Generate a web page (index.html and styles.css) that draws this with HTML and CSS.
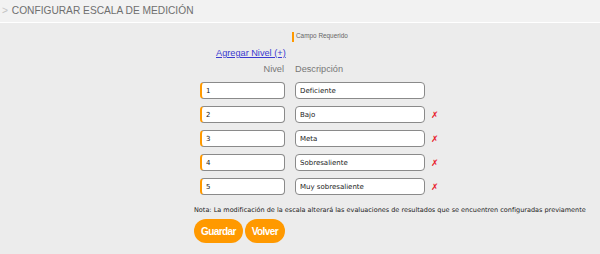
FILE: index.html
```html
<!DOCTYPE html>
<html lang="es">
<head>
    <meta charset="UTF-8">
    <title>Configurar Escala de Medición</title>
    <link rel="stylesheet" href="styles.css">
</head>
<body>
    <div class="page-title"><span class="crumb">&gt;</span> CONFIGURAR ESCALA DE MEDICIÓN</div>

    <div class="content">
        <div class="required-note"><span class="req-mark"></span>Campo Requerido</div>

        <div class="add-row"><a href="#" class="add-link">Agregar Nivel (+)</a></div>

        <div class="scale">
            <div class="col-head level-head">Nivel</div>
            <div class="col-head">Descripción</div>
            <div></div>

            <input type="text" class="field field-level" value="1">
            <input type="text" class="field field-desc" value="Deficiente">
            <div></div>

            <input type="text" class="field field-level" value="2">
            <input type="text" class="field field-desc" value="Bajo">
            <span class="remove">✗</span>

            <input type="text" class="field field-level" value="3">
            <input type="text" class="field field-desc" value="Meta">
            <span class="remove">✗</span>

            <input type="text" class="field field-level" value="4">
            <input type="text" class="field field-desc" value="Sobresaliente">
            <span class="remove">✗</span>

            <input type="text" class="field field-level" value="5">
            <input type="text" class="field field-desc" value="Muy sobresaliente">
            <span class="remove">✗</span>
        </div>

        <p class="note">Nota: La modificación de la escala alterará las evaluaciones de resultados que se encuentren configuradas previamente</p>

        <div class="actions">
            <button class="btn">Guardar</button>
            <button class="btn">Volver</button>
        </div>
    </div>
</body>
</html>
```

FILE: styles.css
```css
* {
    margin: 0;
    padding: 0;
    box-sizing: border-box;
}

body {
    font-family: 'Liberation Sans', Arial, sans-serif;
    background: #ececec;
    color: #333;
    min-height: 254px;
}

.page-title {
    height: 23px;
    line-height: 21px;
    background: #f2f2f2;
    border-bottom: 1px solid #fff;
    padding-left: 2px;
    font-size: 10.2px;
    color: #6f6f6f;
}

.crumb {
    color: #c4c4c4;
    margin-right: 1px;
}

.content {
    padding-top: 9px;
}

.required-note {
    margin-left: 292px;
    height: 10px;
    display: flex;
    align-items: flex-start;
    font-size: 6.4px;
    color: #666;
}

.req-mark {
    width: 2px;
    height: 10px;
    background: #ff9900;
    margin-right: 2px;
}

.add-row {
    margin-left: 216px;
    margin-top: 6px;
    font-size: 9.2px;
    line-height: 11px;
}

.add-link {
    color: #3a3ad0;
}

.scale {
    display: grid;
    grid-template-columns: 85px 130px 20px;
    column-gap: 10px;
    row-gap: 7px;
    margin-left: 200px;
    margin-top: 5px;
    align-items: center;
}

.col-head {
    font-size: 9.2px;
    color: #777;
    line-height: 11px;
}

.level-head {
    text-align: right;
    padding-right: 1px;
}

.field {
    height: 17px;
    background: #fff;
    border: 1px solid #8a8a8a;
    border-radius: 4px;
    padding-left: 4px;
    font-family: 'DejaVu Sans', Verdana, sans-serif;
    font-size: 7px;
    color: #222;
    outline: none;
}

.field-level {
    border-left: 2px solid #ff9900;
}

.remove {
    color: #e8212b;
    font-family: 'DejaVu Sans', sans-serif;
    font-size: 9px;
    margin-left: -4px;
}

.note {
    margin-left: 194px;
    margin-top: 11px;
    font-family: 'DejaVu Sans', Verdana, sans-serif;
    font-size: 6.5px;
    color: #222;
}

.actions {
    margin-left: 194px;
    margin-top: 5px;
    display: flex;
    gap: 2px;
}

.btn {
    background: #ff9900;
    color: #fff;
    border: none;
    height: 24px;
    padding: 0 7px;
    border-radius: 12px;
    font-family: 'Liberation Sans', Arial, sans-serif;
    font-weight: bold;
    font-size: 10px;
    letter-spacing: -0.6px;
    cursor: pointer;
}
```
